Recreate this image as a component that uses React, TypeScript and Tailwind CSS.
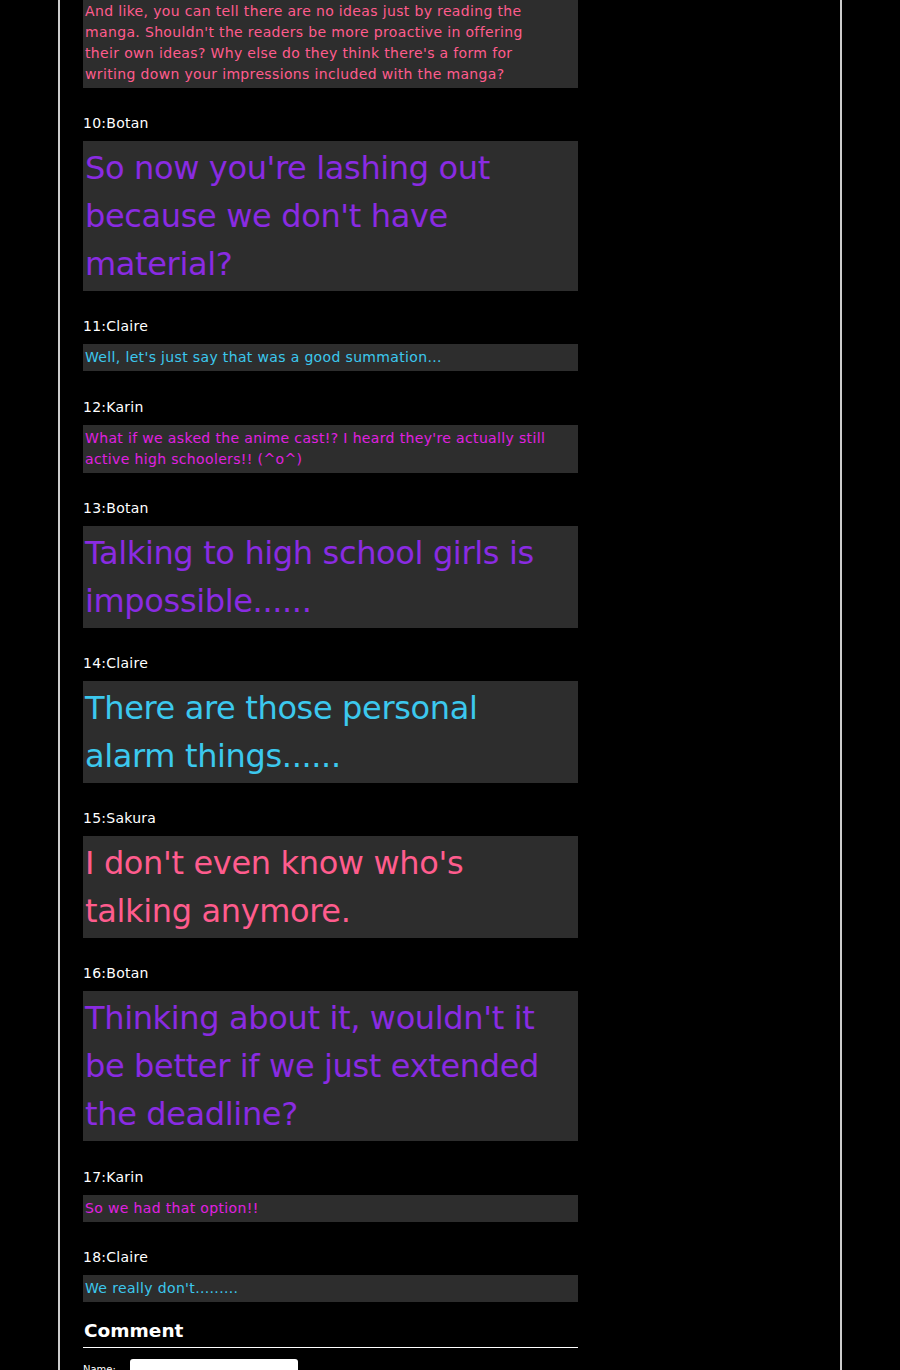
const posts = [
  {
    no: 10,
    name: "Botan",
    big: true,
    text: "So now you're lashing out because we don't have material?",
  },
  { no: 11, name: "Claire", big: false, text: "Well, let's just say that was a good summation..." },
  {
    no: 12,
    name: "Karin",
    big: false,
    text: "What if we asked the anime cast!? I heard they're actually still active high schoolers!! (^o^)",
  },
  { no: 13, name: "Botan", big: true, text: "Talking to high school girls is impossible......" },
  { no: 14, name: "Claire", big: true, text: "There are those personal alarm things......" },
  { no: 15, name: "Sakura", big: true, text: "I don't even know who's talking anymore." },
  {
    no: 16,
    name: "Botan",
    big: true,
    text: "Thinking about it, wouldn't it be better if we just extended the deadline?",
  },
  { no: 17, name: "Karin", big: false, text: "So we had that option!!" },
  { no: 18, name: "Claire", big: false, text: "We really don't........." },
];

const colors: Record<string, string> = {
  Sakura: "text-[#ff5c8d]",
  Botan: "text-[#8a2be2]",
  Claire: "text-[#3cc8ee]",
  Karin: "text-[#e020e0]",
};

function Post({ no, name, big, text }: { no: number; name: string; big: boolean; text: string }) {
  return (
    <div className="pt-[26.2px]">
      <div className="text-[14px] leading-[18px] tracking-[0.25px] text-white">
        {no}:{name}
      </div>
      <div
        className={`mt-[9px] bg-[#2d2d2d] py-[3px] pl-[2px] pr-[22px] ${colors[name]} ${
          big
            ? "text-[32px] leading-[48px] tracking-[-0.35px]"
            : "text-[14px] leading-[21px] tracking-[0.35px]"
        }`}
      >
        {text}
      </div>
    </div>
  );
}

export default function App() {
  return (
    <div className="min-h-[1370px] bg-black font-['DejaVu_Sans',Verdana,sans-serif]">
      <div className="mx-auto w-[784px] min-h-[1370px] border-x-2 border-[#cccccc] pl-[23px]">
        <div className="w-[495px] -mt-[2px]">
          <div className="bg-[#2d2d2d] py-[3px] pl-[2px] pr-[22px] text-[14px] leading-[21px] tracking-[0.35px] text-[#ff5c8d]">
            And like, you can tell there are no ideas just by reading the manga. Shouldn't the readers be
            more proactive in offering their own ideas? Why else do they think there's a form for writing
            down your impressions included with the manga?
          </div>
          {posts.map((p) => (
            <Post key={p.no} {...p} />
          ))}
          <h2 className="mt-[17px] border-b border-white px-[1px] pb-[4px] text-[18.5px] font-bold leading-[24px] text-white">
            Comment
          </h2>
          <div className="mt-[11px] flex items-start gap-[14px]">
            <span className="pt-[5px] text-[10px] leading-[12px] text-white">Name:</span>
            <input className="h-[24px] w-[168px] rounded-[3px] bg-white" />
          </div>
        </div>
      </div>
    </div>
  );
}
